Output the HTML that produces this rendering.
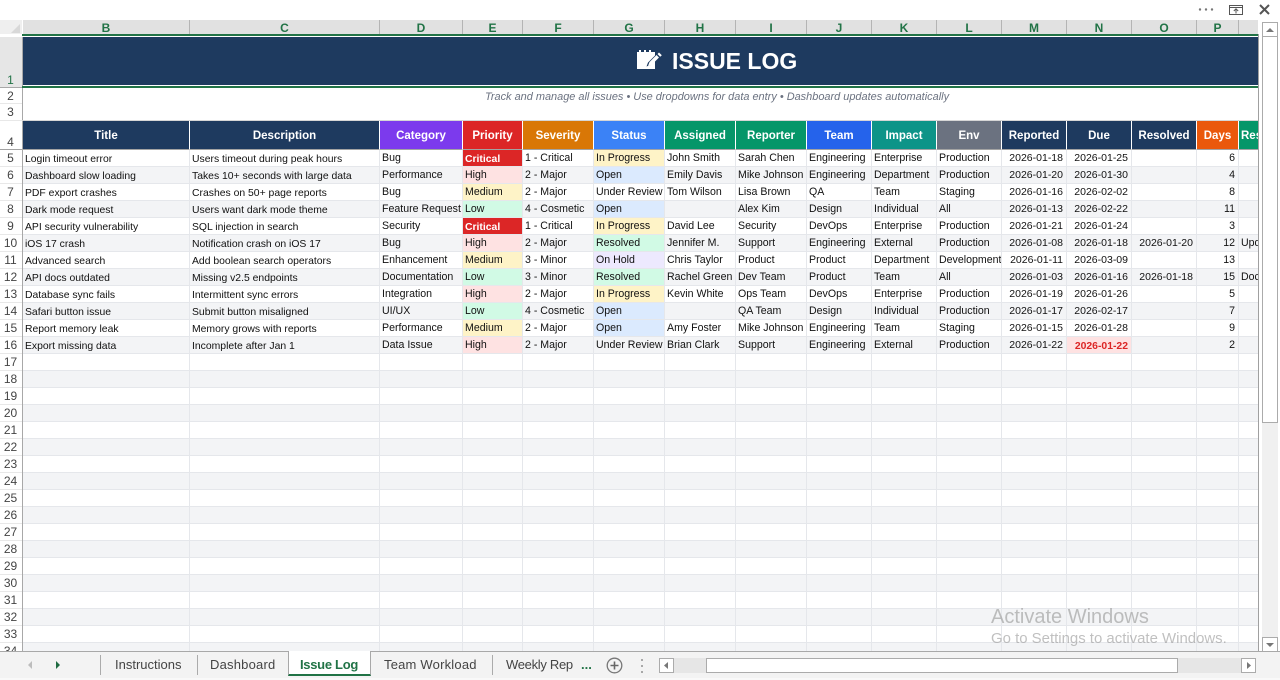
<!DOCTYPE html>
<html><head><meta charset="utf-8"><title>Issue Log</title>
<style>
html,body{margin:0;padding:0;background:#fff}
body{width:1280px;height:680px;overflow:hidden;position:relative;font-family:"Liberation Sans",sans-serif;color:#111}
.a{position:absolute}
#ch div{position:absolute;top:20px;height:14px;background:#e1e1e1;border-right:1px solid #b4b4b4;color:#217346;font:bold 12px/16px "Liberation Sans",sans-serif;text-align:center;box-sizing:content-box}
#rh{left:0;top:37px;width:22px;border-right:1px solid #a8a8a8;color:#444;font-size:12px;text-align:center}
#rh div{height:16px;line-height:17px;border-bottom:1px solid #e8e8e8;background:#fff;padding-right:1px}
#wrap{left:23px;top:121px;width:1235px;height:530px;overflow:hidden}
table{border-collapse:separate;border-spacing:0;table-layout:fixed;width:1277px}
td,th{padding:2px 0 0 2px;height:17px;border-right:1px solid #e5e7eb;border-bottom:1px solid #e5e7eb;font-size:10.6px;line-height:12px;white-space:nowrap;overflow:hidden;vertical-align:top;font-weight:normal;box-sizing:border-box}
th{height:29px;color:#fff;font-weight:bold;font-size:11.5px;line-height:26px;text-align:center;padding:2px 0 0 0;border-right:1px solid #fff;border-bottom:1px solid #a3a3a3;background:#1e3a5f}
td.l{padding-top:4px;font-size:10.4px}
tr:nth-child(odd) td{background:#f3f4f6}
td.c{text-align:right;padding:2px 3px 0 0;font-size:10.5px}
td.r{text-align:right;padding:2px 3px 0 0}
td.cr{background:#dc2626!important;color:#fff;font-weight:bold;padding-top:4px;font-size:10.4px}
td.hi{background:#fee2e2!important}
td.me,td.pr{background:#fef3c7!important}
td.lo,td.re{background:#d1fae5!important}
td.op{background:#dbeafe!important}
td.ho{background:#ede9fe!important}
td.od{background:#fee2e2!important;color:#dc2626;font-weight:bold;padding:4px 3px 0 0;text-align:right;font-size:10.4px}
.tab{position:absolute;top:657px;font-size:13px;line-height:15px;color:#444}
.sep{position:absolute;top:655px;width:1px;height:20px;background:#ababab}
.btn{position:absolute;box-sizing:border-box;background:#fff;border:1px solid #ababab}
</style></head><body>

<!-- window controls -->
<svg class="a" style="left:1190px;top:0" width="90" height="20" viewBox="0 0 90 20">
<circle cx="10" cy="9.5" r="1.2" fill="#777"/><circle cx="16" cy="9.5" r="1.2" fill="#777"/><circle cx="22" cy="9.5" r="1.2" fill="#777"/>
<path d="M39.5 5.5H52.5V14.5H39.5ZM39.5 7.5H52.5M46 13.5V9M43.8 11L46 8.8L48.2 11" fill="none" stroke="#555"/>
<path d="M70 5L79 14M79 5L70 14" stroke="#555" stroke-width="2"/>
</svg>

<!-- column headers -->
<div id="ch">
<div style="left:0;width:22px;background:#efefef;border:0"></div>
<div style="left:23px;width:166px">B</div>
<div style="left:190px;width:189px">C</div>
<div style="left:380px;width:82px">D</div>
<div style="left:463px;width:59px">E</div>
<div style="left:523px;width:70px">F</div>
<div style="left:594px;width:70px">G</div>
<div style="left:665px;width:70px">H</div>
<div style="left:736px;width:70px">I</div>
<div style="left:807px;width:64px">J</div>
<div style="left:872px;width:64px">K</div>
<div style="left:937px;width:64px">L</div>
<div style="left:1002px;width:64px">M</div>
<div style="left:1067px;width:64px">N</div>
<div style="left:1132px;width:64px">O</div>
<div style="left:1197px;width:41px">P</div>
<div style="left:1239px;width:19px;border:0"></div>
</div>
<svg class="a" style="left:10px;top:24px" width="11" height="10"><path d="M10 0V9H1Z" fill="#d8d8d8"/></svg>
<div class="a" style="left:22px;top:34px;width:1236px;height:2px;background:#217346"></div>

<!-- row headers -->
<div id="rh" class="a">
<div style="height:47px;line-height:15px;padding-top:3px;box-sizing:content-box;background:#e6e6e6;color:#217346;border-bottom:0"><div style="height:33px;background:none;border:0"></div>1</div>
<div style="height:15px;border-top:1px solid #a8a8a8">2</div>
<div>3</div>
<div style="height:28px;line-height:15px;border-bottom:1px solid #a3a3a3"><div style="height:14px;background:none;border:0"></div>4</div>
<div>5</div><div>6</div><div>7</div><div>8</div><div>9</div><div>10</div><div>11</div><div>12</div><div>13</div><div>14</div><div>15</div><div>16</div><div>17</div><div>18</div><div>19</div><div>20</div><div>21</div><div>22</div><div>23</div><div>24</div><div>25</div><div>26</div><div>27</div><div>28</div><div>29</div><div>30</div><div>31</div><div>32</div><div>33</div><div style="height:8px;overflow:hidden;border:0">34</div>
</div>

<!-- banner -->
<div class="a" style="left:23px;top:37px;width:1235px;height:48px;background:#1e3a5f"></div>
<div class="a" style="left:22px;top:86px;width:1236px;height:2px;background:#217346"></div>
<svg class="a" style="left:636px;top:48px" width="27" height="22" viewBox="0 0 27 22">
<path fill="#fff" d="M1 4H3V2H5V4H8V2H10V4H13V2H15V4H19V7.5L12 14.5L10.5 18.5L14.5 17L19 12.5V21H1Z"/>
<path fill="#fff" d="M13.5 14L20.5 7L23 9.5L16 16.5L12 18ZM21.5 6L23 4.5L25.8 7.2L24.2 8.8Z"/>
</svg>
<div class="a" style="left:672px;top:46px;font-weight:bold;font-size:23px;line-height:30px;color:#fff;white-space:nowrap">ISSUE LOG</div>
<div class="a" style="left:485px;top:90px;font-style:italic;font-size:10.95px;line-height:14px;color:#6b7280;white-space:nowrap">Track and manage all issues • Use dropdowns for data entry • Dashboard updates automatically</div>
<div class="a" style="left:22px;top:120px;width:1236px;height:1px;background:#d6d6d6"></div>

<!-- grid -->
<div id="wrap" class="a">
<table>
<colgroup><col style="width:167px"><col style="width:190px"><col style="width:83px"><col style="width:60px"><col style="width:71px"><col style="width:71px"><col style="width:71px"><col style="width:71px"><col style="width:65px"><col style="width:65px"><col style="width:65px"><col style="width:65px"><col style="width:65px"><col style="width:65px"><col style="width:42px"><col style="width:61px"></colgroup>
<tbody>
<tr><th>Title</th><th>Description</th><th style="background:#7c3aed">Category</th><th style="background:#dc2626">Priority</th><th style="background:#d97706">Severity</th><th style="background:#3b82f6">Status</th><th style="background:#059669">Assigned</th><th style="background:#059669">Reporter</th><th style="background:#2563eb">Team</th><th style="background:#0d9488">Impact</th><th style="background:#6b7280">Env</th><th>Reported</th><th>Due</th><th>Resolved</th><th style="background:#ea580c">Days</th><th style="background:#059669;text-align:left;padding-left:2px">Resolution</th></tr>
<tr><td class="l">Login timeout error</td><td class="l">Users timeout during peak hours</td><td>Bug</td><td class="cr">Critical</td><td>1 - Critical</td><td class="pr">In Progress</td><td>John Smith</td><td>Sarah Chen</td><td>Engineering</td><td>Enterprise</td><td>Production</td><td class="c">2026-01-18</td><td class="c">2026-01-25</td><td></td><td class="r">6</td><td></td></tr>
<tr><td class="l">Dashboard slow loading</td><td class="l">Takes 10+ seconds with large data</td><td>Performance</td><td class="hi">High</td><td>2 - Major</td><td class="op">Open</td><td>Emily Davis</td><td>Mike Johnson</td><td>Engineering</td><td>Department</td><td>Production</td><td class="c">2026-01-20</td><td class="c">2026-01-30</td><td></td><td class="r">4</td><td></td></tr>
<tr><td class="l">PDF export crashes</td><td class="l">Crashes on 50+ page reports</td><td>Bug</td><td class="me">Medium</td><td>2 - Major</td><td>Under Review</td><td>Tom Wilson</td><td>Lisa Brown</td><td>QA</td><td>Team</td><td>Staging</td><td class="c">2026-01-16</td><td class="c">2026-02-02</td><td></td><td class="r">8</td><td></td></tr>
<tr><td class="l">Dark mode request</td><td class="l">Users want dark mode theme</td><td>Feature Request</td><td class="lo">Low</td><td>4 - Cosmetic</td><td class="op">Open</td><td></td><td>Alex Kim</td><td>Design</td><td>Individual</td><td>All</td><td class="c">2026-01-13</td><td class="c">2026-02-22</td><td></td><td class="r">11</td><td></td></tr>
<tr><td class="l">API security vulnerability</td><td class="l">SQL injection in search</td><td>Security</td><td class="cr">Critical</td><td>1 - Critical</td><td class="pr">In Progress</td><td>David Lee</td><td>Security</td><td>DevOps</td><td>Enterprise</td><td>Production</td><td class="c">2026-01-21</td><td class="c">2026-01-24</td><td></td><td class="r">3</td><td></td></tr>
<tr><td class="l">iOS 17 crash</td><td class="l">Notification crash on iOS 17</td><td>Bug</td><td class="hi">High</td><td>2 - Major</td><td class="re">Resolved</td><td>Jennifer M.</td><td>Support</td><td>Engineering</td><td>External</td><td>Production</td><td class="c">2026-01-08</td><td class="c">2026-01-18</td><td class="c">2026-01-20</td><td class="r">12</td><td>Updated</td></tr>
<tr><td class="l">Advanced search</td><td class="l">Add boolean search operators</td><td>Enhancement</td><td class="me">Medium</td><td>3 - Minor</td><td class="ho">On Hold</td><td>Chris Taylor</td><td>Product</td><td>Product</td><td>Department</td><td>Development</td><td class="c">2026-01-11</td><td class="c">2026-03-09</td><td></td><td class="r">13</td><td></td></tr>
<tr><td class="l">API docs outdated</td><td class="l">Missing v2.5 endpoints</td><td>Documentation</td><td class="lo">Low</td><td>3 - Minor</td><td class="re">Resolved</td><td>Rachel Green</td><td>Dev Team</td><td>Product</td><td>Team</td><td>All</td><td class="c">2026-01-03</td><td class="c">2026-01-16</td><td class="c">2026-01-18</td><td class="r">15</td><td>Docs</td></tr>
<tr><td class="l">Database sync fails</td><td class="l">Intermittent sync errors</td><td>Integration</td><td class="hi">High</td><td>2 - Major</td><td class="pr">In Progress</td><td>Kevin White</td><td>Ops Team</td><td>DevOps</td><td>Enterprise</td><td>Production</td><td class="c">2026-01-19</td><td class="c">2026-01-26</td><td></td><td class="r">5</td><td></td></tr>
<tr><td class="l">Safari button issue</td><td class="l">Submit button misaligned</td><td>UI/UX</td><td class="lo">Low</td><td>4 - Cosmetic</td><td class="op">Open</td><td></td><td>QA Team</td><td>Design</td><td>Individual</td><td>Production</td><td class="c">2026-01-17</td><td class="c">2026-02-17</td><td></td><td class="r">7</td><td></td></tr>
<tr><td class="l">Report memory leak</td><td class="l">Memory grows with reports</td><td>Performance</td><td class="me">Medium</td><td>2 - Major</td><td class="op">Open</td><td>Amy Foster</td><td>Mike Johnson</td><td>Engineering</td><td>Team</td><td>Staging</td><td class="c">2026-01-15</td><td class="c">2026-01-28</td><td></td><td class="r">9</td><td></td></tr>
<tr><td class="l">Export missing data</td><td class="l">Incomplete after Jan 1</td><td>Data Issue</td><td class="hi">High</td><td>2 - Major</td><td>Under Review</td><td>Brian Clark</td><td>Support</td><td>Engineering</td><td>External</td><td>Production</td><td class="c">2026-01-22</td><td class="od">2026-01-22</td><td></td><td class="r">2</td><td></td></tr>
</tbody></table>
<svg class="a" style="left:0;top:233px" width="1235" height="297">
<defs><pattern id="p" width="1" height="34" patternUnits="userSpaceOnUse"><rect width="1" height="34" fill="#fff"/><rect y="17" width="1" height="16" fill="#f3f4f6"/><rect y="16" width="1" height="1" fill="#e5e7eb"/><rect y="33" width="1" height="1" fill="#e5e7eb"/></pattern></defs>
<rect width="1235" height="297" fill="url(#p)"/>
<path fill="#e5e7eb" d="M166 0h1v297h-1zM356 0h1v297h-1zM439 0h1v297h-1zM499 0h1v297h-1zM570 0h1v297h-1zM641 0h1v297h-1zM712 0h1v297h-1zM783 0h1v297h-1zM848 0h1v297h-1zM913 0h1v297h-1zM978 0h1v297h-1zM1043 0h1v297h-1zM1108 0h1v297h-1zM1173 0h1v297h-1zM1215 0h1v297h-1z"/>
</svg>
</div>

<!-- sheet edges -->
<div class="a" style="left:1258px;top:34px;width:1px;height:618px;background:#a0a0a0"></div>

<!-- activate watermark -->
<div class="a" style="left:991px;top:605px;font-size:20px;line-height:24px;color:rgba(150,150,150,.6);white-space:nowrap">Activate Windows</div>
<div class="a" style="left:991px;top:630px;font-size:14.95px;line-height:18px;color:rgba(150,150,150,.6);white-space:nowrap">Go to Settings to activate Windows.</div>

<!-- vertical scrollbar -->
<div class="a" style="left:1262px;top:22px;width:16px;height:630px;background:#f0f0f0"></div>
<div class="btn" style="left:1262px;top:22px;width:16px;height:15px"><svg width="14" height="13" style="display:block"><path d="M3 9L7 5L11 9Z" fill="#777"/></svg></div>
<div class="btn" style="left:1262px;top:36px;width:16px;height:387px"></div>
<div class="btn" style="left:1262px;top:637px;width:16px;height:15px"><svg width="14" height="13" style="display:block"><path d="M3 5L7 9L11 5Z" fill="#777"/></svg></div>

<!-- tab bar -->
<div class="a" style="left:0;top:651px;width:1280px;height:29px;background:#f3f3f3;border-top:1px solid #a8a8a8;box-sizing:border-box"></div>
<div class="a" style="left:0;top:678px;width:1280px;height:2px;background:#f9f9f9"></div>
<svg class="a" style="left:25px;top:660px" width="40" height="10"><path d="M7 1L3 5L7 9Z" fill="#bdbdbd"/><path d="M31 1L35 5L31 9Z" fill="#1f6b41"/></svg>
<div class="sep" style="left:100px"></div>
<div class="tab" style="left:115px">Instructions</div>
<div class="sep" style="left:197px"></div>
<div class="tab" style="left:210px;letter-spacing:.2px">Dashboard</div>
<div class="a" style="left:288px;top:651px;width:83px;height:25px;background:#fff;border:1px solid #a8a8a8;border-bottom:2px solid #217346;border-top:0;box-sizing:border-box"></div>
<div class="tab" style="left:300px;color:#217346;font-weight:bold;letter-spacing:-.3px">Issue Log</div>
<div class="tab" style="left:384px;letter-spacing:.2px">Team Workload</div>
<div class="sep" style="left:492px"></div>
<div class="tab" style="left:506px;letter-spacing:-.3px">Weekly Rep</div>
<div class="tab" style="left:581px;color:#217346;font-weight:bold">...</div>
<svg class="a" style="left:606px;top:657px" width="17" height="17"><circle cx="8.5" cy="8.5" r="7.3" fill="none" stroke="#777" stroke-width="1.3"/><path d="M8.5 4.5v8M4.5 8.5h8" stroke="#666" stroke-width="1.6"/></svg>
<svg class="a" style="left:640px;top:658px" width="4" height="16"><path d="M1 1h2v2H1zM1 7h2v2H1zM1 13h2v2H1z" fill="#a8a8a8"/></svg>
<div class="a" style="left:659px;top:658px;width:596px;height:15px;background:#e6e6e6"></div>
<div class="btn" style="left:659px;top:658px;width:15px;height:15px"><svg width="13" height="13" style="display:block"><path d="M8 3L4 6.5L8 10Z" fill="#777"/></svg></div>
<div class="btn" style="left:706px;top:658px;width:472px;height:15px"></div>
<div class="btn" style="left:1241px;top:658px;width:15px;height:15px"><svg width="13" height="13" style="display:block"><path d="M5 3L9 6.5L5 10Z" fill="#777"/></svg></div>

</body></html>
